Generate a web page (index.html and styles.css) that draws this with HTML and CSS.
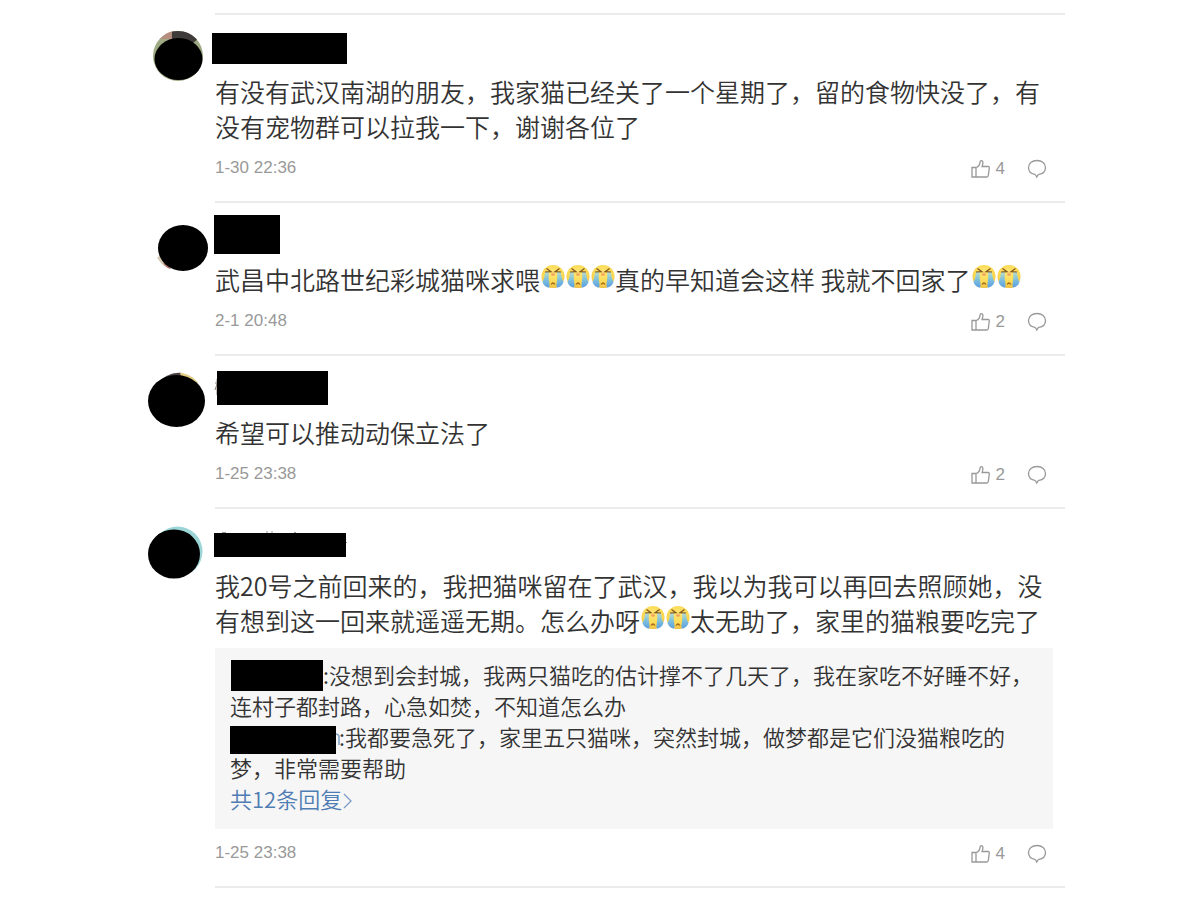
FILE: index.html
```html
<!DOCTYPE html>
<html lang="zh-CN">
<head>
    <meta charset="UTF-8">
    <meta name="viewport" content="width=device-width, initial-scale=1.0">
    <title>评论</title>
    <link rel="stylesheet" href="styles.css">
</head>
<body>
    <svg class="sprite" aria-hidden="true">
        <defs>
            <linearGradient id="tear" x1="0" y1="0" x2="0" y2="1">
                <stop offset="0" stop-color="#b9dccb"/>
                <stop offset="0.5" stop-color="#7fc0dc"/>
                <stop offset="1" stop-color="#5b9fe0"/>
            </linearGradient>
            <radialGradient id="face" cx="0.5" cy="0.35" r="0.65">
                <stop offset="0" stop-color="#ffe878"/>
                <stop offset="0.7" stop-color="#fad74f"/>
                <stop offset="1" stop-color="#eec04a"/>
            </radialGradient>
        </defs>
        <symbol id="cry" viewBox="0 0 25 26">
            <circle cx="13" cy="12.5" r="11.5" fill="url(#face)"/>
            <path d="M5 8h4c-.4 4-.4 7 .2 10 .4 2 .4 4 0 5.500C6 23.500 3.500 21 2.500 18c1.500-3 2.300-6 2.500-10z" fill="url(#tear)"/>
            <path d="M21 8h-4c.4 4 .4 7-.2 10-.4 2-.4 4 0 5.500 3.200 0 5.700-2.500 6.700-5.500-1.500-3-2.300-6-2.500-10z" fill="url(#tear)"/>
            <path d="M6.500 4.500l4.500 3.200-6 .3M19.500 4.500L15 7.700l6 .3" fill="none" stroke="#80551f" stroke-width="1.200"/>
            <ellipse cx="13" cy="10.500" rx="2" ry="1.200" fill="#f5a05a"/>
            <path d="M11 20.500c.3-2.500 3.700-2.500 4 0-1.400-1.100-2.600-1.100-4 0z" fill="#a5651c" stroke="#a5651c" stroke-width=".6"/>
        </symbol>
        <symbol id="like" viewBox="0 0 20 20">
            <path d="M1 8.500h4v9.500H1zM5 8.500c2.500-.8 3.700-2.700 4-5.200.1-1 .5-1.600 1.300-1.600 1.200 0 1.700 1 1.600 2.300-.1 1.300-.4 2.300-.8 3.500h6.100c.8 0 1.200.5 1.100 1.300l-1 7.700c-.1.900-.6 1.500-1.500 1.500H5"/>
        </symbol>
        <symbol id="reply" viewBox="0 0 20 20">
            <path d="M10 1.500c5 0 8.500 3 8.500 7 0 3.600-2.700 6.300-6.600 6.900-.9.200-1.200.9-2.100 2.600-.7-1.600-1.100-2.400-2-2.600C4 14.700 1.500 12.100 1.500 8.500c0-4 3.500-7 8.500-7z"/>
        </symbol>
    </svg>

    <main class="comments">
        <article class="comment">
            <svg class="avatar" viewBox="0 0 60 72" aria-hidden="true">
                <circle cx="30" cy="43" r="25" fill="#9daa83"/>
                <path d="M12 26c4-5 9-7.500 15-8l7 8H12z" fill="#b58e80"/>
                <path d="M24 18.700c10-2 19 1 25 8l-6 5-19-5z" fill="#3f3b3a"/>
                <ellipse cx="30.500" cy="46" rx="24" ry="21"/>
            </svg>
            <div class="content">
                <svg class="name" viewBox="0 0 140 59" aria-hidden="true">
                    <rect x="-3" y="18" width="135" height="31"/>
                </svg>
                <p class="text">有没有武汉南湖的朋友，我家猫已经关了一个星期了，留的食物快没了，有没有宠物群可以拉我一下，谢谢各位了</p>
                <div class="footer">
                    <time>1-30 22:36</time>
                    <div class="actions">
                        <button aria-label="赞 4"><svg class="icon"><use href="#like"/></svg>4</button>
                        <button aria-label="回复"><svg class="icon"><use href="#reply"/></svg></button>
                    </div>
                </div>
            </div>
        </article>

        <article class="comment">
            <svg class="avatar" viewBox="0 0 60 72" aria-hidden="true">
                <path d="M9 54l5-1 8 12c-6-1-10-5-13-11z" fill="#d5cbb4"/>
                <path d="M15 60l4-1 4 7c-3 0-6-3-8-6z" fill="#b0786b"/>
                <ellipse cx="35" cy="45" rx="25" ry="23"/>
            </svg>
            <div class="content">
                <svg class="name" viewBox="0 0 140 59" aria-hidden="true">
                    <rect x="-1" y="12" width="66" height="39"/>
                </svg>
                <p class="text">武昌中北路世纪彩城猫咪求喂<svg class="emoji"><use href="#cry"/></svg><svg class="emoji"><use href="#cry"/></svg><svg class="emoji"><use href="#cry"/></svg>真的早知道会这样 我就不回家了<svg class="emoji"><use href="#cry"/></svg><svg class="emoji"><use href="#cry"/></svg></p>
                <div class="footer">
                    <time>2-1 20:48</time>
                    <div class="actions">
                        <button aria-label="赞 2"><svg class="icon"><use href="#like"/></svg>2</button>
                        <button aria-label="回复"><svg class="icon"><use href="#reply"/></svg></button>
                    </div>
                </div>
            </div>
        </article>

        <article class="comment">
            <svg class="avatar" viewBox="0 0 60 72" aria-hidden="true">
                <path d="M12 25c6-6 14-9 22-8l2 10H12z" fill="#4c4142"/>
                <path d="M32 16.800c8 1 13 4 18 10l-16-2z" fill="#e3cc83"/>
                <ellipse cx="28.500" cy="45" rx="28.500" ry="26"/>
            </svg>
            <div class="content">
                <svg class="name" viewBox="0 0 140 59" aria-hidden="true">
                    <path d="M0 27h3M2 28L0 34M2 23v16" fill="none" stroke="#8b8078" stroke-width="1"/>
                    <rect x="2" y="15" width="111" height="34"/>
                </svg>
                <p class="text">希望可以推动动保立法了</p>
                <div class="footer">
                    <time>1-25 23:38</time>
                    <div class="actions">
                        <button aria-label="赞 2"><svg class="icon"><use href="#like"/></svg>2</button>
                        <button aria-label="回复"><svg class="icon"><use href="#reply"/></svg></button>
                    </div>
                </div>
            </div>
        </article>

        <article class="comment">
            <svg class="avatar" viewBox="0 0 60 72" aria-hidden="true">
                <circle cx="29.500" cy="42.500" r="25" fill="#9bd5d6"/>
                <ellipse cx="26" cy="45" rx="26" ry="24.500"/>
            </svg>
            <div class="content">
                <svg class="name" viewBox="0 0 140 59" aria-hidden="true">
                    <path d="M7 23.500h4M51 23h2M56 23h2M79 23.500h2M131 33.500h1" stroke="#999" stroke-width="1"/>
                    <rect x="-1" y="24" width="132" height="24"/>
                </svg>
                <p class="text">我20号之前回来的，我把猫咪留在了武汉，我以为我可以再回去照顾她，没有想到这一回来就遥遥无期。怎么办呀<svg class="emoji"><use href="#cry"/></svg><svg class="emoji"><use href="#cry"/></svg>太无助了，家里的猫粮要吃完了</p>
                <div class="replies">
                    <p><svg class="mask" viewBox="0 0 93 31" aria-hidden="true"><rect x="1" y="1" width="92" height="31"/></svg>:没想到会封城，我两只猫吃的估计撑不了几天了，我在家吃不好睡不好，连村子都封路，心急如焚，不知道怎么办</p>
                    <p><svg class="mask mask-long" viewBox="0 0 109 31" aria-hidden="true"><path d="M105 13c3 0 4 1 4 3v8" fill="none" stroke="#7d9cc4" stroke-width="1.500"/><rect y="5" width="106" height="28"/></svg>:我都要急死了，家里五只猫咪，突然封城，做梦都是它们没猫粮吃的梦，非常需要帮助</p>
                    <a href="#">共12条回复<svg class="arrow" viewBox="0 0 12 18" aria-hidden="true"><path d="M2 2l7 7-7 7"/></svg></a>
                </div>
                <div class="footer">
                    <time>1-25 23:38</time>
                    <div class="actions">
                        <button aria-label="赞 4"><svg class="icon"><use href="#like"/></svg>4</button>
                        <button aria-label="回复"><svg class="icon"><use href="#reply"/></svg></button>
                    </div>
                </div>
            </div>
        </article>
    </main>
</body>
</html>
```

FILE: styles.css
```css
* {
    box-sizing: border-box;
}
body {
    margin: 0;
    background: #fff;
    color: #333;
    font-family: "Noto Sans CJK SC", sans-serif;
    font-weight: 350;
}
.sprite {
    position: absolute;
    width: 0;
    height: 0;
}
.comments {
    padding: 13px 135px 13px 148px;
}
.comment {
    display: grid;
    grid-template-columns: 67px 1fr;
}
.avatar {
    width: 60px;
    height: 72px;
}
.content {
    border-bottom: 2px solid #ebebeb;
}
.comment:first-child .content {
    border-top: 2px solid #ebebeb;
}
.name {
    display: block;
    width: 140px;
    height: 59px;
    overflow: visible;
}
.text {
    margin: 0 12px 0 0;
    font-size: 25px;
    line-height: 35px;
}
.emoji {
    width: 25px;
    height: 26px;
    vertical-align: 0;
}
.footer {
    display: flex;
    justify-content: space-between;
    align-items: center;
    height: 57px;
    padding: 0 18px 9px 0;
    color: #999;
    font-family: "Liberation Sans", Arial, sans-serif;
    font-size: 17px;
    font-weight: 400;
}
.actions {
    display: flex;
    gap: 22px;
}
.actions button {
    display: flex;
    align-items: center;
    gap: 5px;
    padding: 2px 0 0;
    border: none;
    background: none;
    color: inherit;
    font: inherit;
    cursor: pointer;
}
.icon {
    width: 20px;
    height: 20px;
    fill: none;
    stroke: #999;
    stroke-width: 1.3;
}
.replies {
    margin: 10px 12px 0 0;
    padding: 11px 15px 15px;
    background: #f6f6f6;
    font-size: 22px;
    line-height: 31px;
}
.replies p {
    margin: 0;
}
.replies a {
    display: block;
    color: #4f7cb3;
    text-decoration: none;
}
.mask {
    width: 93px;
    height: 31px;
    overflow: visible;
    vertical-align: top;
}
.mask-long {
    width: 109px;
}
.arrow {
    width: 12px;
    height: 18px;
    vertical-align: -2px;
    fill: none;
    stroke: #7d9cc4;
    stroke-width: 1.3;
}
```
